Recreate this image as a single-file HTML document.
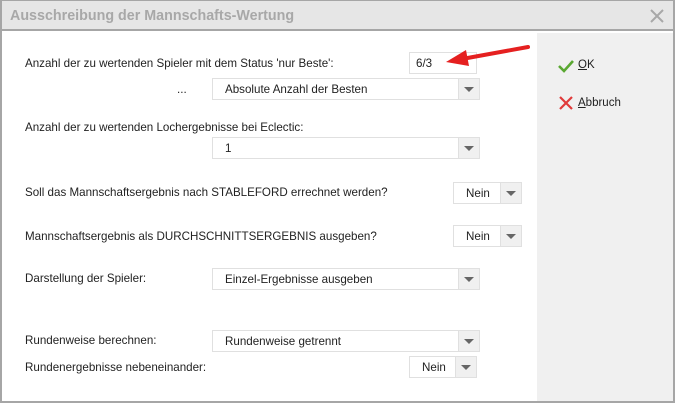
<!DOCTYPE html>
<html><head><meta charset="utf-8"><style>
*{margin:0;padding:0;box-sizing:border-box}
body{width:675px;height:403px;overflow:hidden;background:#fff;font-family:"Liberation Sans",sans-serif;font-size:11.6px;color:#222;position:relative}
.frame{position:absolute;left:0;top:0;width:675px;height:403px;border:2px solid #a6a6a6;border-top:1px solid #a6a6a6}
.title{position:absolute;left:2px;top:1px;width:671px;height:30px;background:#e6e6e6;border-bottom:2px solid #a6a6a6}
.title span{position:absolute;left:8px;top:7px;font-size:14.3px;font-weight:bold;color:#a8a8a8}
.side{position:absolute;left:537px;top:33px;width:136px;height:368px;background:#f0f0f0}
.t{position:absolute;white-space:nowrap}
.dd{position:absolute;border:1px solid #e0e0e0;background:#fff;height:22px}
.dd .v{position:absolute;left:12px;top:4px;white-space:nowrap}
.dd .a{position:absolute;right:0;top:0;width:21px;height:20px;background:#f0f0f0;border-left:1px solid #e0e0e0}
.dd .a:after{content:"";position:absolute;left:5px;top:8px;border-left:5px solid transparent;border-right:5px solid transparent;border-top:5px solid #666}
</style></head><body>
<div class="title"><span>Ausschreibung der Mannschafts-Wertung</span>
<svg style="position:absolute;left:647px;top:7px" width="16" height="16"><path d="M2 2L14 14M14 2L2 14" stroke="#a8a8a8" stroke-width="2"/></svg></div>
<div class="side"></div>
<div class="frame"></div>

<div class="t" style="left:25px;top:57px">Anzahl der zu wertenden Spieler mit dem Status 'nur Beste':</div>
<div class="dd" style="left:409px;top:52px;width:68px"><span class="v" style="left:6px">6/3</span></div>
<div class="t" style="left:177px;top:83px">...</div>
<div class="dd" style="left:212px;top:78px;width:268px"><span class="v">Absolute Anzahl der Besten</span><span class="a"></span></div>
<div class="t" style="left:25px;top:121px">Anzahl der zu wertenden Lochergebnisse bei Eclectic:</div>
<div class="dd" style="left:212px;top:137px;width:268px"><span class="v">1</span><span class="a"></span></div>
<div class="t" style="left:25px;top:186px">Soll das Mannschaftsergebnis nach STABLEFORD errechnet werden?</div>
<div class="dd" style="left:453px;top:182px;width:69px"><span class="v">Nein</span><span class="a"></span></div>
<div class="t" style="left:25px;top:230px">Mannschaftsergebnis als DURCHSCHNITTSERGEBNIS ausgeben?</div>
<div class="dd" style="left:453px;top:225px;width:69px"><span class="v">Nein</span><span class="a"></span></div>
<div class="t" style="left:25px;top:272px">Darstellung der Spieler:</div>
<div class="dd" style="left:212px;top:268px;width:268px"><span class="v">Einzel-Ergebnisse ausgeben</span><span class="a"></span></div>
<div class="t" style="left:25px;top:334px">Rundenweise berechnen:</div>
<div class="dd" style="left:212px;top:330px;width:268px"><span class="v">Rundenweise getrennt</span><span class="a"></span></div>
<div class="t" style="left:25px;top:361px">Rundenergebnisse nebeneinander:</div>
<div class="dd" style="left:409px;top:356px;width:68px"><span class="v">Nein</span><span class="a"></span></div>

<svg style="position:absolute;left:440px;top:40px" width="95" height="30"><path d="M88 7L22 19" stroke="#e52020" stroke-width="4" stroke-linecap="round"/><path d="M6 22L26 10L29 26Z" fill="#e52020"/></svg>

<svg style="position:absolute;left:557px;top:58px" width="18" height="16"><path d="M2 8L7 13L16 3" stroke="#5aa832" stroke-width="2.6" fill="none"/></svg>
<div class="t" style="left:578px;top:59px;font-size:11.5px"><u>O</u>K</div>
<svg style="position:absolute;left:558px;top:95px" width="16" height="16"><path d="M2 2L14 14M14 2L2 14" stroke="#e03a3a" stroke-width="2.2"/></svg>
<div class="t" style="left:578px;top:97px;font-size:11.5px"><u>A</u>bbruch</div>
</body></html>
